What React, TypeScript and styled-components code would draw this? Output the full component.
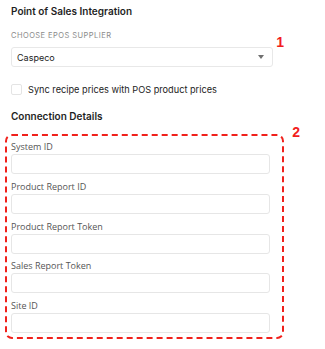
import React from 'react';
import styled, { createGlobalStyle } from 'styled-components';

const GlobalStyle = createGlobalStyle`
    body {
        margin: 0;
        background: #fff;
        font-family: Inter, "Liberation Sans", sans-serif;
        color: #222;
    }
`;

const Page = styled.div`
    padding: 4px 0 0 11px;
    width: 262px;
`;

const Heading = styled.h2`
    margin: 0;
    font-size: 10px;
    line-height: 14px;
    font-weight: 600;
    color: #1f1f1f;
`;

const Caption = styled.div`
    margin-top: 13px;
    font-size: 7.5px;
    line-height: 10px;
    letter-spacing: 0.45px;
    text-transform: uppercase;
    color: #8a8a8a;
`;

const Annotated = styled.div`
    position: relative;
`;

// red numbered callouts drawn over the form
const Marker = styled.span<{ $top: number; $right: number }>`
    position: absolute;
    top: ${p => p.$top}px;
    right: ${p => p.$right}px;
    font-family: "Liberation Sans", Arial, sans-serif;
    font-weight: 700;
    font-size: 14px;
    line-height: 14px;
    color: #f21d1d;
`;

const Select = styled.div`
    margin-top: 6px;
    height: 20px;
    box-sizing: border-box;
    border: 1px solid #e8e8e8;
    border-radius: 3px;
    display: flex;
    align-items: center;
    justify-content: space-between;
    padding: 0 8px 0 5px;
    font-size: 9px;
    color: #222;
`;

const Caret = styled.span`
    width: 0;
    height: 0;
    border-left: 3.5px solid transparent;
    border-right: 3.5px solid transparent;
    border-top: 4px solid #707070;
`;

const CheckRow = styled.label`
    margin-top: 17px;
    display: flex;
    align-items: center;
    gap: 6px;
    font-size: 9.2px;
    line-height: 11px;
    color: #222;
`;

const Box = styled.span`
    width: 11px;
    height: 11px;
    box-sizing: border-box;
    border: 1px solid #e4e4e4;
    border-radius: 2px;
`;

const SubHeading = styled(Heading)`
    margin-top: 14px;
`;

const Fieldset = styled.div`
    margin: 11px 0 0 -6px;
    width: 279px;
    box-sizing: border-box;
    border: 2px dashed #f0201b;
    border-radius: 7px;
    padding: 4px 12px 4px 4px;
    display: flex;
    flex-direction: column;
    gap: 5.75px;
`;

const Field = styled.div`
    display: flex;
    flex-direction: column;
    gap: 1px;
`;

const FieldLabel = styled.div`
    font-family: "Open Sans", sans-serif;
    font-size: 9px;
    line-height: 13px;
    color: #555;
`;

const Input = styled.div`
    height: 20px;
    box-sizing: border-box;
    border: 1px solid #e6e6e6;
    border-radius: 3px;
`;

const fields = ['System ID', 'Product Report ID', 'Product Report Token', 'Sales Report Token', 'Site ID'];

export default function App() {
    return (
        <>
            <GlobalStyle />
            <Page>
                <Heading>Point of Sales Integration</Heading>
                <Caption>Choose EPOS Supplier</Caption>
                <Annotated>
                    <Marker $top={-12} $right={-11}>1</Marker>
                    <Select>
                        <span>Caspeco</span>
                        <Caret />
                    </Select>
                </Annotated>
                <CheckRow>
                    <Box />
                    Sync recipe prices with POS product prices
                </CheckRow>
                <SubHeading>Connection Details</SubHeading>
                <Annotated>
                    <Marker $top={-9} $right={-27}>2</Marker>
                    <Fieldset>
                        {fields.map(f => (
                            <Field key={f}>
                                <FieldLabel>{f}</FieldLabel>
                                <Input />
                            </Field>
                        ))}
                    </Fieldset>
                </Annotated>
            </Page>
        </>
    );
}
